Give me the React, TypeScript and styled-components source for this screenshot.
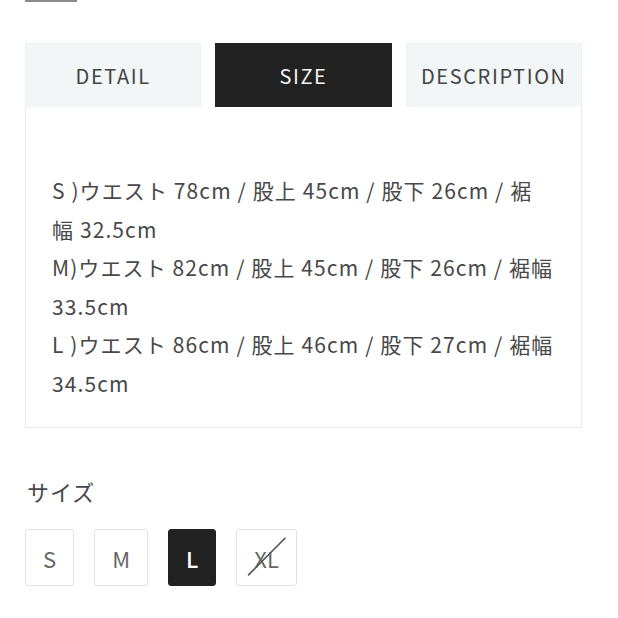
import React from "react";
import styled, { createGlobalStyle } from "styled-components";

const Global = createGlobalStyle`
  html, body { margin: 0; padding: 0; background: #ffffff; }
  body { font-family: "Noto Sans CJK JP", "Noto Sans", sans-serif; color: #444; }
`;

const Page = styled.div`
  width: 618px;
  height: 618px;
  box-sizing: border-box;
  padding: 0 36px 0 25px;
  display: flex;
  flex-direction: column;
`;

const TopBar = styled.div`
  width: 52px;
  height: 2px;
  background: #8a8a8a;
  margin-bottom: 41px;
`;

const Tabs = styled.div`
  display: flex;
  gap: 14px;
`;

const Tab = styled.div<{ $active?: boolean }>`
  flex: 1;
  height: 64px;
  display: flex;
  align-items: center;
  justify-content: center;
  box-sizing: border-box;
  font-size: 20px;
  letter-spacing: 1.6px;
  background: ${(p) => (p.$active ? "#222222" : "#f3f6f7")};
  color: ${(p) => (p.$active ? "#f4f4f4" : "#444")};
  border: 1px solid ${(p) => (p.$active ? "#222" : "#eef1f2")};
  border-bottom: none;
`;

const Panel = styled.div`
  height: 321px;
  box-sizing: border-box;
  border: 1px solid #e9e9e9;
  border-top: none;
  padding: 64px 20px 0 26px;
`;

const Line = styled.div`
  font-size: 21px;
  letter-spacing: 1.1px;
  line-height: 38.5px;
  white-space: nowrap;
  color: #484848;
`;

const Label = styled.div`
  margin-top: 48px;
  font-size: 22px;
  letter-spacing: 1px;
  line-height: 30px;
  color: #484848;
  padding-left: 2px;
`;

const Sizes = styled.div`
  display: flex;
  gap: 20px;
  margin-top: 23px;
`;

const SizeButton = styled.div<{ $active?: boolean }>`
  position: relative;
  height: 57px;
  min-width: 48px;
  padding: 0 17px;
  box-sizing: border-box;
  display: flex;
  align-items: center;
  justify-content: center;
  border: 1px solid ${(p) => (p.$active ? "#222" : "#e2e2e2")};
  border-radius: 3px;
  background: ${(p) => (p.$active ? "#222222" : "#ffffff")};
  color: ${(p) => (p.$active ? "#ffffff" : "#666")};
  font-size: 22px;
  font-weight: ${(p) => (p.$active ? 500 : 400)};
`;

const Strike = styled.svg`
  position: absolute;
  inset: 0;
  width: 100%;
  height: 100%;
  pointer-events: none;
`;

const lines = [
  "S )ウエスト 78cm / 股上 45cm / 股下 26cm / 裾",
  "幅 32.5cm",
  "M)ウエスト 82cm / 股上 45cm / 股下 26cm / 裾幅",
  "33.5cm",
  "L )ウエスト 86cm / 股上 46cm / 股下 27cm / 裾幅",
  "34.5cm",
];

export default function App() {
  return (
    <>
      <Global />
      <Page>
        <TopBar />
        <Tabs>
          <Tab>DETAIL</Tab>
          <Tab $active>SIZE</Tab>
          <Tab>DESCRIPTION</Tab>
        </Tabs>
        <Panel>
          {lines.map((l, i) => (
            <Line key={i}>{l}</Line>
          ))}
        </Panel>
        <Label>サイズ</Label>
        <Sizes>
          <SizeButton>S</SizeButton>
          <SizeButton>M</SizeButton>
          <SizeButton $active>L</SizeButton>
          <SizeButton>
            XL
            <Strike viewBox="0 0 58 57" preserveAspectRatio="none">
              <line x1="11" y1="47" x2="48" y2="8" stroke="#555" strokeWidth="1.6" />
            </Strike>
          </SizeButton>
        </Sizes>
      </Page>
    </>
  );
}
